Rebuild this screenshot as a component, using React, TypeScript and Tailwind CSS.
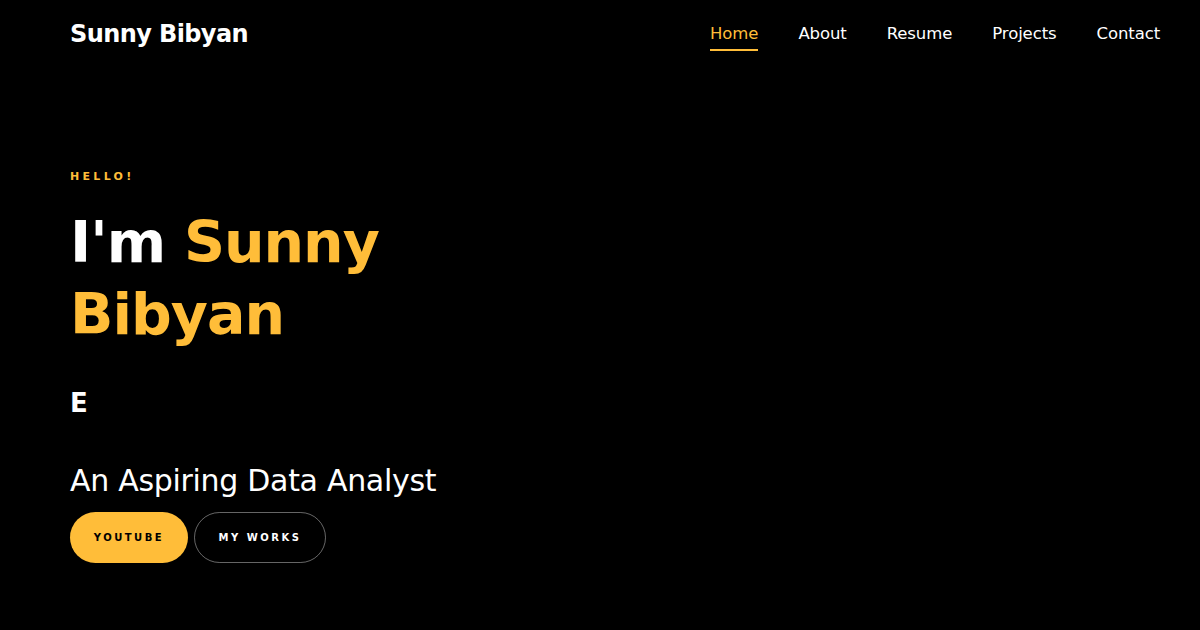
import React from 'react';

const navItems = ['Home', 'About', 'Resume', 'Projects', 'Contact'];

const App: React.FC = () => {
  return (
    <div
      className="w-[1200px] h-[630px] bg-black text-white overflow-hidden"
      style={{ fontFamily: '"DejaVu Sans", "Open Sans", sans-serif' }}
    >
      {/* Navbar */}
      <nav className="flex items-center justify-between pl-[70px] pr-[40px] h-[68px]">
        <a className="text-[24px] font-bold tracking-[-0.6px] text-white">Sunny Bibyan</a>
        <ul className="flex items-center gap-[40px] text-[16.5px] tracking-[-0.1px]">
          {navItems.map((item, i) => (
            <li key={item} className="relative">
              <span className={i === 0 ? 'text-[#ffbd39]' : 'text-white'}>{item}</span>
              {i === 0 && <span className="absolute left-0 right-0 -bottom-[5px] h-[2px] bg-[#ffbd39]"></span>}
            </li>
          ))}
        </ul>
      </nav>

      {/* Hero */}
      <section className="pl-[70px] pt-[103px]">
        <span className="block text-[11px] font-bold tracking-[3.3px] text-[#ffbd39] leading-none">HELLO!</span>
        <h1 className="mt-[24px] text-[57px] font-bold leading-[72px] tracking-[-1px]">
          I'm <span className="text-[#ffbd39]">Sunny</span>
          <br />
          <span className="text-[#ffbd39]">Bibyan</span>
        </h1>
        <h2 className="mt-[40px] text-[26px] font-bold leading-none">E</h2>
        <h2 className="mt-[50px] text-[30px] font-normal leading-none tracking-[-0.3px]">An Aspiring Data Analyst</h2>
        <div className="flex gap-[6px] mt-[16px]">
          <a className="flex items-center justify-center w-[118px] h-[51px] rounded-full bg-[#ffbd39] text-black text-[10px] font-semibold tracking-[2.5px]">
            YOUTUBE
          </a>
          <a className="flex items-center justify-center w-[132px] h-[51px] rounded-full border border-white/40 text-white text-[10px] font-bold tracking-[2.5px]">
            MY WORKS
          </a>
        </div>
      </section>
    </div>
  );
};

export default App;
